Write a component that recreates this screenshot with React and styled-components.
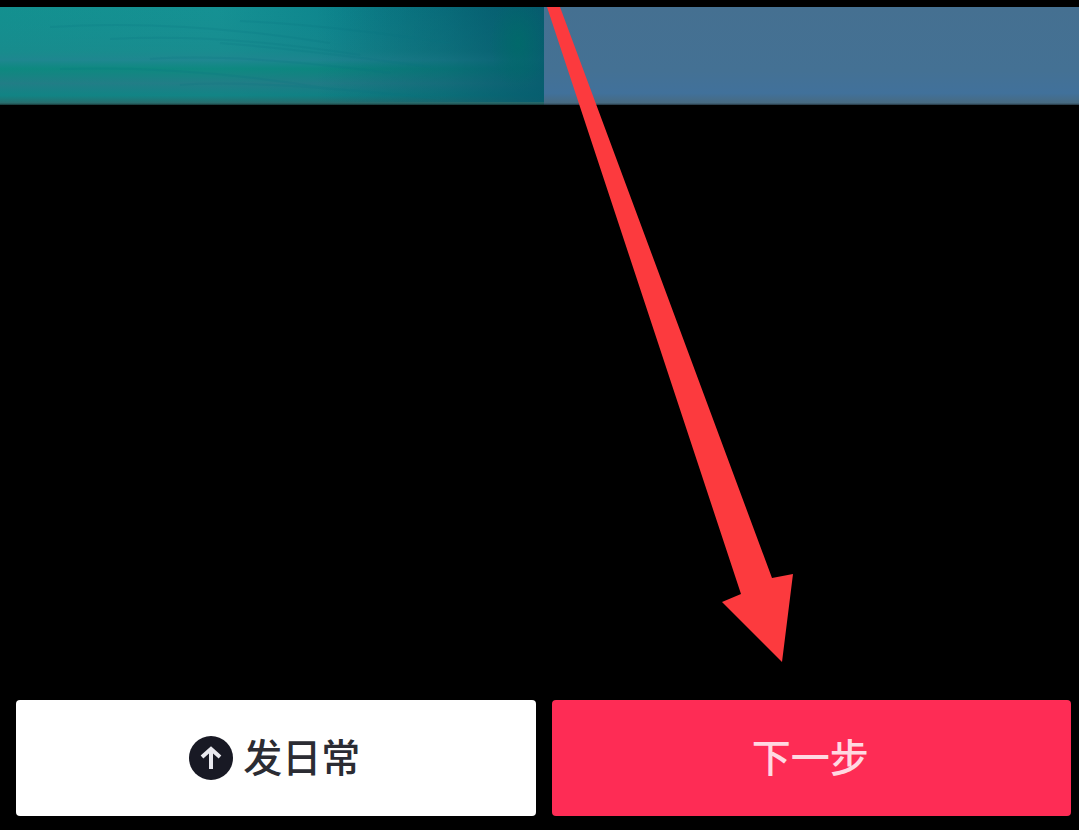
import React from "react";
import styled, { createGlobalStyle } from "styled-components";

const GlobalStyle = createGlobalStyle`
  *, *::before, *::after { box-sizing: border-box; }
  body {
    margin: 0;
    background: #000;
    font-family: "Noto Sans CJK SC", "Noto Sans", sans-serif;
  }
`;

const Page = styled.main`
  position: relative;
  display: flex;
  flex-direction: column;
  min-height: 100vh;
  padding-top: 7px;
  overflow: hidden;
  background: #000;
`;

const Preview = styled.section`
  display: grid;
  grid-template-columns: 544fr 535fr;
  height: 98px;
`;

const Sea = styled.svg`
  display: block;
  width: 100%;
  height: 98px;
`;

const Sky = styled.div`
  background: linear-gradient(#457091 0%, #447194 65%, #41719b 88%, #476a80 98%, #22333e 100%);
`;

const Actions = styled.footer`
  display: grid;
  grid-template-columns: 1fr 1fr;
  gap: 16px;
  margin-top: auto;
  padding: 0 8px 14px 16px;
`;

const ActionButton = styled.button`
  display: flex;
  align-items: center;
  justify-content: center;
  gap: 10px;
  height: 116px;
  padding: 0 2px 0 0;
  border: 0;
  border-radius: 4px;
  background: ${({ $primary }) => ($primary ? "#fe2c55" : "#fff")};
  color: ${({ $primary }) => ($primary ? "#ffd9e2" : "#2b2c33")};
  font: inherit;
  font-size: 39px;
  font-weight: 500;
  line-height: 56px;
  cursor: pointer;
`;

const Label = styled.span`
  padding-bottom: 6px;
`;

const UploadIcon = styled.svg`
  width: 44px;
  height: 44px;
  flex: none;
`;

const Pointer = styled.svg`
  position: absolute;
  top: 7px;
  right: 279px;
  width: 256px;
  height: 656px;
  pointer-events: none;
`;

const ripples = [
  "M50 20 Q180 12 330 36",
  "M110 32 Q220 26 360 48",
  "M150 52 Q240 46 390 66",
  "M60 62 Q190 58 330 82",
  "M180 78 Q260 72 440 92",
  "M240 14 Q330 18 450 36",
  "M220 36 Q300 42 430 60",
];

function SeaPhoto() {
  return (
    <Sea viewBox="0 0 544 98" preserveAspectRatio="none" aria-hidden="true">
      <defs>
        <linearGradient id="water">
          <stop offset="0" stopColor="#13908f" />
          <stop offset="0.4" stopColor="#159193" />
          <stop offset="0.62" stopColor="#0d858d" />
          <stop offset="0.82" stopColor="#0a7480" />
          <stop offset="1" stopColor="#056072" />
        </linearGradient>
        <linearGradient id="depth" x1="0" y1="0" x2="0" y2="1">
          <stop offset="0" stopColor="#1a8890" stopOpacity="0" />
          <stop offset="0.45" stopColor="#208489" stopOpacity="0.35" />
          <stop offset="0.54" stopColor="#238390" stopOpacity="0.7" />
          <stop offset="0.63" stopColor="#0b8577" stopOpacity="0.65" />
          <stop offset="0.78" stopColor="#267783" stopOpacity="0.75" />
          <stop offset="0.9" stopColor="#107c7d" stopOpacity="0.6" />
          <stop offset="0.98" stopColor="#2b6868" stopOpacity="0.9" />
          <stop offset="1" stopColor="#153333" />
        </linearGradient>
        <linearGradient id="shade">
          <stop offset="0.58" stopColor="#065c6e" stopOpacity="0" />
          <stop offset="0.82" stopColor="#065c6e" stopOpacity="0.4" />
          <stop offset="1" stopColor="#065c6e" stopOpacity="0.9" />
        </linearGradient>
        <radialGradient id="green">
          <stop offset="0" stopColor="#006b69" stopOpacity="0.8" />
          <stop offset="1" stopColor="#006b69" stopOpacity="0" />
        </radialGradient>
      </defs>
      <rect width="544" height="98" fill="url(#water)" />
      <rect width="544" height="98" fill="url(#depth)" />
      <rect width="544" height="95" fill="url(#shade)" />
      <ellipse cx="518" cy="36" rx="28" ry="48" fill="url(#green)" />
      <g fill="none" stroke="#087481" strokeWidth="2" opacity="0.18">
        {ripples.map((d) => (
          <path key={d} d={d} />
        ))}
      </g>
    </Sea>
  );
}

export default function App() {
  return (
    <>
      <GlobalStyle />
      <Page>
        <Preview>
          <SeaPhoto />
          <Sky />
        </Preview>
        <Actions>
          <ActionButton type="button">
            <UploadIcon viewBox="0 0 44 44" aria-hidden="true">
              <circle cx="22" cy="22" r="22" fill="#181924" />
              <path
                d="M22 33V14M13 21L22 13L31 21"
                fill="none"
                stroke="#e9e9ef"
                strokeWidth="4"
              />
            </UploadIcon>
            <Label>发日常</Label>
          </ActionButton>
          <ActionButton type="button" $primary>
            <Label>下一步</Label>
          </ActionButton>
        </Actions>
        <Pointer viewBox="0 0 256 656" aria-hidden="true">
          <path d="M3 0H16L228 571L249 567L238 655L178 595L197 587Z" fill="#fc3a3e" />
        </Pointer>
      </Page>
    </>
  );
}
